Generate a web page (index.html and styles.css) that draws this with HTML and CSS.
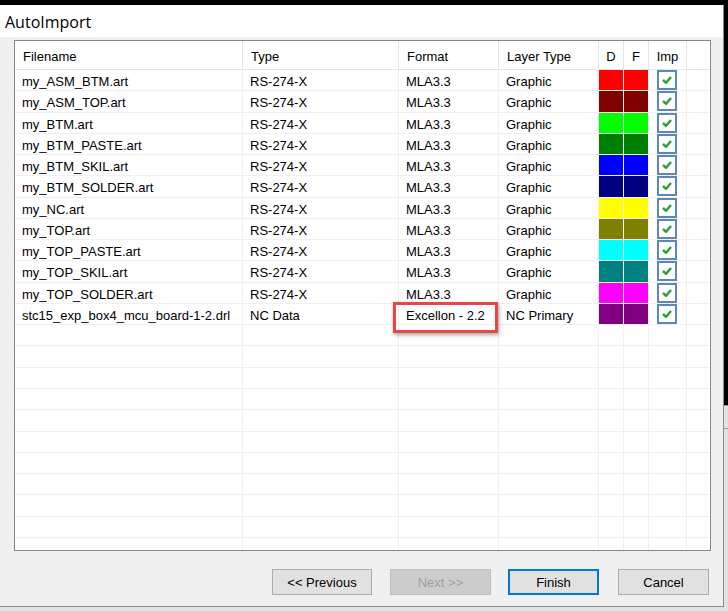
FILE: index.html
```html
<!DOCTYPE html>
<html>
<head>
<meta charset="utf-8">
<link rel="stylesheet" href="styles.css">
</head>
<body>
<div class="window">
  <div class="titlebar">AutoImport</div>
  <div class="dialog">
    <div class="list">
      <div class="head">
        <div class="hc">Filename</div>
        <div class="hc">Type</div>
        <div class="hc">Format</div>
        <div class="hc">Layer Type</div>
        <div class="hc center">D</div>
        <div class="hc center">F</div>
        <div class="hc center">Imp</div>
        <div class="hc last"></div>
      </div>
      <div class="rows" id="rows"></div>
      <div class="highlight"></div>
    </div>
    <div class="buttons">
      <div class="btn w100">&lt;&lt; Previous</div>
      <div class="btn w101 disabled">Next &gt;&gt;</div>
      <div class="btn w91 default">Finish</div>
      <div class="btn w92">Cancel</div>
    </div>
  </div>
</div>
<script src="app.js"></script>
</body>
</html>
```
FILE: app.js
```js
const data = [
  ["my_ASM_BTM.art","RS-274-X","MLA3.3","Graphic","#ff0000"],
  ["my_ASM_TOP.art","RS-274-X","MLA3.3","Graphic","#800000"],
  ["my_BTM.art","RS-274-X","MLA3.3","Graphic","#00ff00"],
  ["my_BTM_PASTE.art","RS-274-X","MLA3.3","Graphic","#008000"],
  ["my_BTM_SKIL.art","RS-274-X","MLA3.3","Graphic","#0000ff"],
  ["my_BTM_SOLDER.art","RS-274-X","MLA3.3","Graphic","#000080"],
  ["my_NC.art","RS-274-X","MLA3.3","Graphic","#ffff00"],
  ["my_TOP.art","RS-274-X","MLA3.3","Graphic","#808000"],
  ["my_TOP_PASTE.art","RS-274-X","MLA3.3","Graphic","#00ffff"],
  ["my_TOP_SKIL.art","RS-274-X","MLA3.3","Graphic","#008080"],
  ["my_TOP_SOLDER.art","RS-274-X","MLA3.3","Graphic","#ff00ff"],
  ["stc15_exp_box4_mcu_board-1-2.drl","NC Data","Excellon - 2.2","NC Primary","#800080"]
];
const rows = document.getElementById("rows");
const check = '<svg class="tick" width="10" height="8" viewBox="0 0 10 8"><polyline points="1,4 4,6.8 9,1" fill="none" stroke="#2e9e36" stroke-width="2.4"/></svg>';
let html = "";
for (let i = 0; i < 23; i++) {
  const d = data[i];
  if (d) {
    html += '<div class="row">' +
      '<div class="c">' + d[0] + '</div>' +
      '<div class="c">' + d[1] + '</div>' +
      '<div class="c">' + d[2] + '</div>' +
      '<div class="c">' + d[3] + '</div>' +
      '<div class="c sw"><div class="swatch" style="background:' + d[4] + '"></div></div>' +
      '<div class="c sw"><div class="swatch" style="background:' + d[4] + '"></div></div>' +
      '<div class="c"><div class="cb">' + check + '</div></div>' +
      '<div class="c last"></div></div>';
  } else {
    html += '<div class="row"><div class="c"></div><div class="c"></div><div class="c"></div><div class="c"></div><div class="c"></div><div class="c"></div><div class="c"></div><div class="c last"></div></div>';
  }
}
rows.innerHTML = html;
```
FILE: styles.css
```css
html {
  background: linear-gradient(to bottom, #000 0, #000 405px, #9a9a9a 405px, #9a9a9a 406px, #e2e2e2 406px, #e2e2e2 428px, #a0a0a0 428px, #a0a0a0 429px, #e2e2e2 429px);
  height: 611px;
  overflow: hidden;
}
body {
  margin: 0;
  font-family: "Liberation Sans", Arial, sans-serif;
  font-size: 13px;
  color: #000;
}
.window {
  margin-top: 5px;
  width: 723px;
  border-right: 1px solid #8c8c8c;
  border-bottom: 1px solid #8c8c8c;
  background: #f0f0f0;
}
.titlebar {
  height: 32px;
  background: #fff;
  font-family: "Open Sans", "Liberation Sans", sans-serif;
  font-size: 16px;
  line-height: 34px;
  padding-left: 5px;
  color: #000;
  overflow: hidden;
}
.dialog {
  padding: 3px 14px 11px 14px;
}
.list {
  position: relative;
  width: 697px;
  height: 511px;
  box-sizing: border-box;
  border: 1px solid #828790;
  background: #fff;
  overflow: hidden;
}
.head, .row {
  display: grid;
  grid-template-columns: 228px 156px 100px 100px 25px 25px 38px 1fr;
}
.head {
  height: 29px;
  box-sizing: border-box;
  border-bottom: 1px solid #e5e5e5;
}
.hc {
  border-right: 1px solid #e5e5e5;
  padding-left: 8px;
  line-height: 31px;
  white-space: nowrap;
  overflow: hidden;
}
.hc.center {
  padding-left: 0;
  text-align: center;
}
.hc.last {
  border-right: none;
}
.row {
  height: 21.27px;
  box-sizing: border-box;
  border-bottom: 1px solid #f0f0f0;
}
.c {
  border-right: 1px solid #f0f0f0;
  padding-left: 7px;
  line-height: 24px;
  white-space: nowrap;
  overflow: hidden;
  box-sizing: border-box;
}
.c.last {
  border-right: none;
}
.c.sw {
  padding: 0;
}
.swatch {
  height: 100%;
}
.cb {
  margin-left: 1px;
  width: 20px;
  height: 20px;
  box-sizing: border-box;
  border: 2px solid #5b88ba;
  background: #fff;
  padding: 4px 0 0 3px;
  line-height: 0;
}
.highlight {
  position: absolute;
  left: 378px;
  top: 261px;
  width: 105px;
  height: 31px;
  box-sizing: border-box;
  border: 3px solid #ec4545;
  box-shadow: 1px 2px 4px rgba(0, 0, 0, 0.35);
}
.buttons {
  display: flex;
  justify-content: flex-end;
  gap: 17px;
  margin-top: 18px;
}
.btn {
  height: 26px;
  box-sizing: border-box;
  border: 1px solid #adadad;
  background: #e1e1e1;
  text-align: center;
  line-height: 25px;
}
.w100 { width: 100px; margin-right: 1px; }
.w101 { width: 101px; }
.w91 { width: 91px; }
.w92 { width: 91px; margin-left: 2px; }
.btn.disabled {
  background: #cccccc;
  border-color: #bfbfbf;
  color: #a0a0a0;
}
.btn.default {
  border: 2px solid #0078d7;
  line-height: 23px;
}
```
